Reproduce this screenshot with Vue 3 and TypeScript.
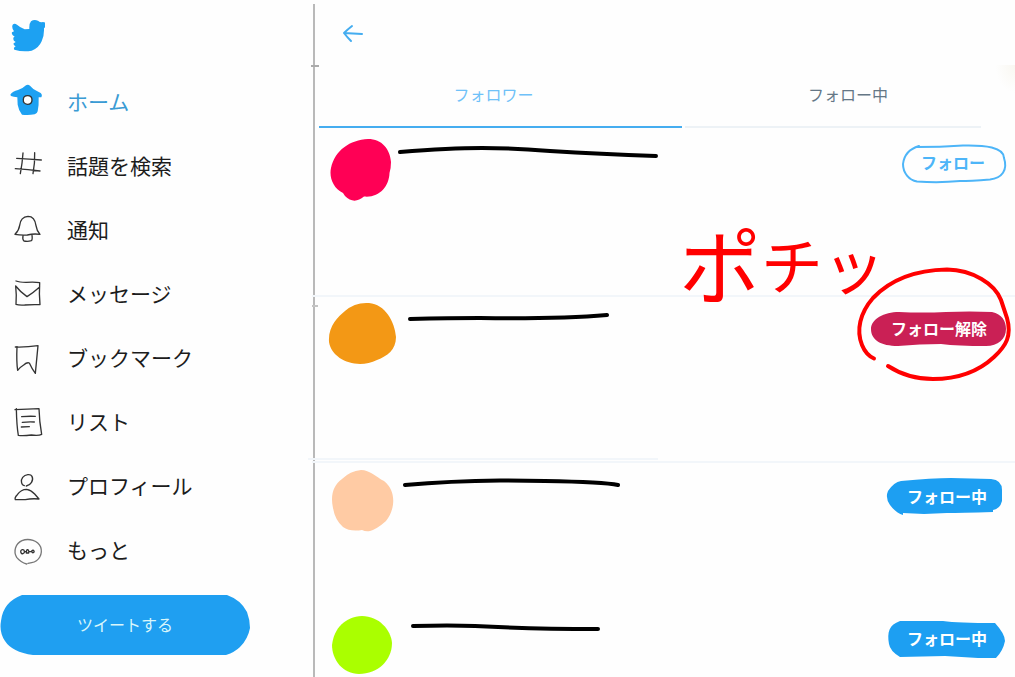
<script setup lang="ts">
interface Stroke {
  d: string
  fill?: string
  width?: number
}
interface NavItem {
  label: string
  viewBox: string
  color: string
  strokes: Stroke[]
  active?: boolean
}
interface Row {
  kind: 'follow' | 'unfollow' | 'following'
  action: string
  color: string
  top: number
  avatar: string
  name: string
  buttonBox: string
  button: string
}

const nav: NavItem[] = [
  {
    label: 'ホーム', viewBox: '27 252 108 108', color: 'none', active: true,
    strokes: [
      { d: 'M31 284 Q38 274 54 270 Q68 266 78 256 Q84 252 90 257 L100 267 Q112 274 122 279 Q128 284 124 292 L116 292 Q117 316 113 334 Q111 342 104 343 Q84 347 66 344 Q56 332 53 314 L52 292 Q40 291 33 288Z', fill: '#1da1f2' },
      { d: 'M83 287 C91 287 96 292 96 300 C96 308 90 313 82 313 C74 312 69 307 70 299 C70 291 75 287 83 287Z', fill: '#fff', width: 4 },
    ],
  },
  {
    label: '話題を検索', viewBox: '27 444 108 108', color: '#333',
    strokes: [{ d: 'M69 459 Q67 490 61 521 M104 458 Q105 490 99 521 M50 475 Q88 477 124 480 M46 506 Q85 508 120 513' }],
  },
  {
    label: '通知', viewBox: '27 36 108 108', color: '#333',
    strokes: [{ d: 'M45 103 Q57 91 59 76 C61 58 68 50 84 49 C98 49 106 61 108 77 Q110 92 120 103 Q101 100 82 105 Q61 106 45 103Z M69 107 Q67 119 72 123 Q83 126 94 122 Q98 119 96 106' }],
  },
  {
    label: 'メッセージ', viewBox: '27 228 108 108', color: '#333',
    strokes: [{ d: 'M48 243 Q58 247 78 247 Q104 245 119 248 Q117 280 120 314 Q97 313 74 315 Q56 316 48 313 Q50 283 47 258 Q62 277 81 290 Q100 278 119 261' }],
  },
  {
    label: 'ブックマーク', viewBox: '27 420 108 108', color: '#333',
    strokes: [{ d: 'M46 441 Q80 442 114 437 Q110 479 106 520 Q96 507 88 489 Q81 486 71 495 Q61 501 53 511 Q49 486 51 440' }],
  },
  {
    label: 'リスト', viewBox: '27 12 108 108', color: '#333',
    strokes: [{ d: 'M45 29 Q83 27 117 26 Q118 64 125 103 Q116 108 94 105 Q69 108 55 106 Q50 76 49 26 M65 50 Q85 48 106 49 M67 67 Q85 65 103 66 M64 81 L88 80' }],
  },
  {
    label: 'プロフィール', viewBox: '27 204 108 108', color: '#333',
    strokes: [{ d: 'M73 257 C63 255 62 240 68 232 C76 222 92 221 96 229 C102 241 92 255 79 258 M46 299 Q43 293 52 284 Q63 268 80 268 Q93 270 104 282 L117 297 Q94 295 76 299 Q58 299 46 299Z' }],
  },
  {
    label: 'もっと', viewBox: '27 396 108 108', color: '#777',
    strokes: [
      { d: 'M80 492 Q62 487 50 472 C39 453 47 431 66 422 C88 413 114 423 122 441 C129 462 117 484 95 488 L84 490' },
      { d: 'M67 449 C74 448 76 459 69 461 C62 463 59 450 67 449Z M79 459 Q79 447 84 449 Q88 452 86 459Z M97 451 C101 449 105 456 100 458 C95 459 94 452 97 451Z M74 455 L79 455 M87 455 L95 455', width: 4 },
    ],
  },
]

const rows: Row[] = [
  {
    kind: 'follow', action: 'フォロー', color: '#ff0055', top: 129,
    avatar: 'M368 139 C382 139 390 149 391 162 Q391 168 389.500 173 C389 187 379 198 364 196.500 Q354 205 345 196 L343 193 C333 188 329 177 331 168 C335 150 350 140 368 139Z',
    name: 'M400 152 Q450 148 482 148 Q510 148 550 151 Q600 154 656 156',
    buttonBox: '899 143 108 40',
    button: 'M917 147 Q940 147 963 145.500 C985 145 1004 147 1004 158 C1008 170 1002 178 990 179.500 Q970 181 960 181 Q940 183 917 181.500 C909 180 903 173 903 164 C904 155 909 149 919 146',
  },
  {
    kind: 'unfollow', action: 'フォロー解除', color: '#f39815', top: 297,
    avatar: 'M369 303 C385 304 395 322 396 337 C396 350 387 356 377 360 C357 370 332 360 329 342 C328 326 338 317 345 311 Q355 302 369 303Z',
    name: 'M410 319 Q450 318 480 318 Q560 319 607 315',
    buttonBox: '871 309 136 40',
    button: 'M899 312 Q922 313 946 312 Q970 311 992 312 C1002 314 1006 321 1006 329 C1006 339 998 346 986 346 Q958 346 941 344 Q920 344 898 346 C881 346 871 340 871 329 C871 319 884 312 899 312Z',
  },
  {
    kind: 'following', action: 'フォロー中', color: '#ffcba4', top: 463,
    avatar: 'M361 470 C370 470 376 477 384 481 C397 491 395 510 386 521 Q377 529 370 531 Q366 532 362 530 Q350 532 343 527 Q335 520 333 508 C330 494 334 485 342 479 Q350 471 361 470Z',
    name: 'M405 485 Q450 481 500 480.500 L545 481 Q604 482 618 485',
    buttonBox: '887 477 120 40',
    button: 'M901 481 Q932 478 951 478 L991 479 Q1002 480 1002 490 L1002 501 Q1000 509 993 510 L993 512 Q960 513 947 513 L924 514 L903 513 L903 515 Q896 513 890 505 Q885 498 888 491 Q894 482 901 481Z',
  },
  {
    kind: 'following', action: 'フォロー中', color: '#aaff00', top: 605,
    avatar: 'M362 616 C379 616 391 630 392 643 C392 660 378 674 359 674 C343 674 332 660 332 645 C334 628 345 617 362 616Z',
    name: 'M413 626 Q450 625 475 626 Q530 629 598 629',
    buttonBox: '887 619 120 40',
    button: 'M900 621 L943 621 Q958 623 995 623 Q1005 634 1005 641 Q1003 651 996 658 L978 658 L945 656 L900 657 Q890 651 889 644 C887 632 889 625 900 621Z',
  },
]
</script>

<template>
  <div class="page">
    <aside class="sidebar">
      <a class="logo" href="#" aria-label="Twitter">
        <svg class="icon" viewBox="27 48 108 108" aria-hidden="true">
          <path fill="#1da1f2" d="M38 71 Q43 66 51 71 Q61 80 74 85 L88 84 Q87 68 93 61 Q102 54 114 59 Q121 65 129 63 L139 65 L137 77 L132 82 Q133 104 125 121 Q116 142 95 149 Q69 154 43 146 Q39 140 47 136 Q39 133 41 127 L47 123 Q37 118 41 109 L44 107 Q33 101 36 94 L42 91 Q34 80 38 71Z" />
        </svg>
      </a>
      <nav>
        <a v-for="item in nav" :key="item.label" class="nav-item" :class="{ active: item.active }" href="#">
          <svg class="icon" :viewBox="item.viewBox" aria-hidden="true">
            <path
              v-for="(s, i) in item.strokes" :key="i" :d="s.d" :fill="s.fill ?? 'none'"
              :stroke="s.width ? '#333' : item.color" :stroke-width="s.width ?? 4"
              stroke-linecap="round" stroke-linejoin="round"
            />
          </svg>
          <span>{{ item.label }}</span>
        </a>
      </nav>
      <button class="tweet" type="button">
        <svg class="shape" viewBox="0 0 250 60" preserveAspectRatio="none" aria-hidden="true">
          <path fill="#1f9ff1" d="M22 0 L227 0 Q241 5 247 17 Q250 25 250 33 Q248 44 240 52 Q235 57 226 60 L33 60 Q12 57 5 46 Q-1 37 1 26 Q3 7 22 0Z" />
        </svg>
        <span>ツイートする</span>
      </button>
    </aside>

    <main class="main">
      <header class="top">
        <button class="back" type="button" aria-label="戻る">
          <svg width="24" height="24" viewBox="0 0 24 24" fill="none" stroke="#45adf0" stroke-width="2" stroke-linecap="round" stroke-linejoin="round" aria-hidden="true">
            <path d="M21 13 L3 12 M11 5 Q6 9 3 12 Q6 16 10 20" />
          </svg>
        </button>
      </header>
      <nav class="tabs">
        <a class="tab current" href="#">フォロワー</a>
        <a class="tab" href="#">フォロー中</a>
      </nav>
      <ul class="list">
        <li v-for="(row, i) in rows" :key="i" class="row" :class="'row-' + (i + 1)">
          <svg class="avatar" :viewBox="`328 ${row.top} 72 72`" aria-hidden="true">
            <path :d="row.avatar" :fill="row.color" />
          </svg>
          <svg class="name" :viewBox="`398 ${row.top} 262 72`" aria-hidden="true">
            <path :d="row.name" fill="none" stroke="#000" stroke-width="4" stroke-linecap="round" />
          </svg>
          <button class="action" :class="row.kind" type="button">
            <svg class="shape" :viewBox="row.buttonBox" aria-hidden="true">
              <path :d="row.button" />
            </svg>
            <span>{{ row.action }}</span>
          </button>
          <div v-if="i === 0" class="shout"><span class="po">ポ</span><span class="small">チ</span><span class="small">ッ</span></div>
          <svg v-if="row.kind === 'unfollow'" class="ring" viewBox="851 263 164 122" aria-hidden="true">
            <path d="M874 358.500 Q866 355 862 345 C856 330 860 313 873 298 C892 278 918 270 947 269.500 C973 270 995 284 1001 300 L1007 318 C1012 336 1006 346 994 357 C978 372 958 379 933 379 Q908 379 888 366" fill="none" stroke="#ff0000" stroke-width="4" stroke-linecap="round" />
          </svg>
        </li>
      </ul>
    </main>
  </div>
</template>

<style>
body {
  margin: 0;
  background: #fefefe;
}
</style>

<style scoped>
.page {
  display: flex;
  min-height: 100vh;
  font-family: "Noto Sans CJK JP", "Noto Sans", sans-serif;
  color: #1c1c1c;
}
a {
  color: inherit;
  text-decoration: none;
}
button {
  position: relative;
  display: flex;
  align-items: center;
  justify-content: center;
  padding: 0;
  border: 0;
  background: none;
  font-family: inherit;
  cursor: pointer;
}
button span {
  position: relative;
  padding-bottom: 2px;
}
.shape {
  position: absolute;
  inset: 0;
  width: 100%;
  height: 100%;
  overflow: visible;
}
.sidebar {
  flex: 0 0 313px;
}
.icon {
  flex: none;
  width: 36px;
  height: 36px;
}
.logo {
  display: flex;
  align-items: center;
  height: 70px;
  padding-left: 9px;
}
.nav-item {
  display: flex;
  align-items: center;
  gap: 22px;
  height: 64px;
  padding-left: 9px;
  font-size: 21px;
  line-height: 32px;
}
.nav-item span {
  padding-bottom: 3px;
}
.nav-item.active {
  color: #3a9bd4;
}
.tweet {
  width: 250px;
  height: 60px;
  margin-top: 13px;
  color: #d8f6fb;
  font-size: 16px;
}
.main {
  position: relative;
  flex: 1;
  min-width: 0;
  margin-top: 4px;
  border-left: 2px solid #b9b9b9;
}
.main::before {
  content: "";
  position: absolute;
  top: 61px;
  left: -4px;
  width: 8px;
  height: 2px;
  background: #ababab;
}
.main::after {
  content: "";
  position: absolute;
  top: 61px;
  right: 0;
  width: 20px;
  height: 28px;
  background: radial-gradient(ellipse at top right, #f9f7f1, transparent 70%);
}
.top {
  display: flex;
  align-items: center;
  height: 58px;
  padding-left: 26px;
}
.tabs {
  display: flex;
  gap: 3px;
  height: 66px;
  padding: 0 34px 1px 4px;
}
.tab {
  flex: 266;
  display: flex;
  align-items: center;
  justify-content: center;
  padding-left: 30px;
  border-bottom: 2px solid #edf2f6;
  color: #657786;
  font-size: 16px;
}
.tab.current {
  flex: 349;
  padding: 0 14px 0 0;
  border-color: #45adf0;
  color: #6fc1f8;
}
.list {
  margin: 0;
  padding: 0;
  list-style: none;
}
.row {
  position: relative;
  display: flex;
  align-items: flex-start;
  height: 166px;
  margin-left: -3px;
  padding: 0 8px 0 16px;
  border-bottom: 2px solid #f2f6fa;
}
.row-2 {
  height: 164px;
}
.row-2::before {
  content: "";
  position: absolute;
  top: 8px;
  left: 0;
  width: 6px;
  height: 2px;
  background: #c4c4c4;
}
.row-2::after {
  content: "";
  position: absolute;
  bottom: 1px;
  left: -4px;
  width: 350px;
  height: 2px;
  background: #f2f6fa;
}
.row-3 {
  height: 142px;
  border-bottom: 0;
  margin-left: 0;
  padding-left: 13px;
}
.row-4 {
  height: 72px;
  border-bottom: 0;
  margin-left: 0;
  padding-left: 13px;
}
.avatar {
  flex: none;
  width: 72px;
  height: 72px;
}
.name {
  flex: none;
  width: 262px;
  height: 72px;
  margin-left: -2px;
}
.action {
  flex: none;
  width: 120px;
  height: 40px;
  margin: 14px 0 0 auto;
  color: #fff;
  font-size: 16px;
  font-weight: 700;
}
.action path {
  fill: #1d9ff2;
}
.follow {
  width: 108px;
  color: #4db5f8;
}
.follow path {
  fill: none;
  stroke: #4db5f8;
  stroke-width: 2;
  stroke-linecap: round;
}
.unfollow {
  width: 136px;
  margin-top: 12px;
}
.unfollow path {
  fill: #ca2055;
}
.shout {
  position: absolute;
  top: 93px;
  right: 130px;
  z-index: 1;
  display: flex;
  align-items: center;
  color: #ff0000;
  line-height: 1;
}
.po {
  font-size: 82px;
}
.small {
  font-size: 62px;
}
.ring {
  position: absolute;
  top: -34px;
  right: 0;
  width: 164px;
  height: 122px;
  pointer-events: none;
}
</style>
